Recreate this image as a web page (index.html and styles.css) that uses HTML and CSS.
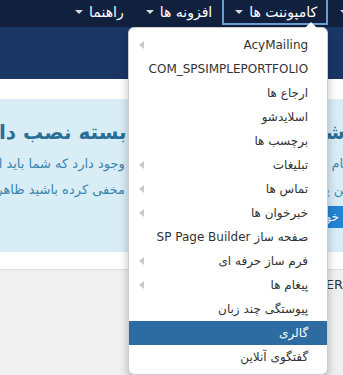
FILE: index.html
```
<!DOCTYPE html>
<html lang="fa" dir="ltr">
<head>
    <meta charset="UTF-8">
    <meta name="viewport" content="width=device-width, initial-scale=1.0">
    <title>کنترل پنل</title>
    <link rel="stylesheet" href="styles.css">
</head>
<body>

    <div class="page">
        <nav class="navbar">
            <ul class="nav">
                <li><a href="#">محتوا <span class="caret"></span></a></li>
                <li class="open">
                    <a href="#">کامپوننت ها <span class="caret"></span></a>
                    <ul class="dropdown-menu">
                        <li><a href="#">AcyMailing <span class="sub-caret"></span></a></li>
                        <li><a href="#">COM_SPSIMPLEPORTFOLIO</a></li>
                        <li><a href="#">ارجاع ها</a></li>
                        <li><a href="#">اسلایدشو</a></li>
                        <li><a href="#">برچسب ها</a></li>
                        <li><a href="#">تبلیغات <span class="sub-caret"></span></a></li>
                        <li><a href="#">تماس ها <span class="sub-caret"></span></a></li>
                        <li><a href="#">خبرخوان ها <span class="sub-caret"></span></a></li>
                        <li><a href="#">صفحه ساز SP Page Builder</a></li>
                        <li><a href="#">فرم ساز حرفه ای <span class="sub-caret"></span></a></li>
                        <li><a href="#">پیغام ها <span class="sub-caret"></span></a></li>
                        <li><a href="#">پیوستگی چند زبان</a></li>
                        <li class="active"><a href="#">گالری</a></li>
                        <li><a href="#">گفتگوی آنلاین</a></li>
                    </ul>
                </li>
                <li><a href="#">افزونه ها <span class="caret"></span></a></li>
                <li><a href="#">راهنما <span class="caret"></span></a></li>
            </ul>
        </nav>

        <header class="header"></header>
        <div class="subhead"></div>

        <div class="content">
            <div class="alert">
                <h2>شما پیغام های پس از بسته نصب دارید</h2>
                <p>پیام های مهمی پس از نصب برای سیستم وجود دارد که شما باید از آنها آگاه باشید</p>
                <p>این پیام ها را تا زمانی که شما همه آنها را مخفی کرده باشید ظاهر می شوند</p>
                <button class="btn">خواندن پیام ها</button>
            </div>
        </div>

        <div class="spacer"></div>

        <div class="panel">
            <span class="panel-title">ORDER</span>
        </div>
    </div>

</body>
</html>
```

FILE: styles.css
```
body {
    margin: 0;
    padding: 0;
    overflow: hidden;
    background-color: #f0f0f0;
    font-family: "DejaVu Sans", sans-serif;
}
.page {
    width: 420px;
    min-height: 375px;
    direction: rtl;
}
.navbar {
    background-color: #11213d;
    height: 27px;
    padding-right: 24px;
}
.nav {
    display: flex;
    margin: 0;
    padding: 0;
    list-style: none;
}
.nav > li {
    position: relative;
}
.nav > li > a {
    display: flex;
    align-items: center;
    gap: 6px;
    height: 25px;
    box-sizing: border-box;
    padding: 0 9px 0 11px;
    border: 1px solid transparent;
    border-top: none;
    color: #fff;
    font-size: 14px;
    text-decoration: none;
    white-space: nowrap;
}
.nav > li.open > a {
    border-color: #6b9fd2;
    border-width: 0 2px 2px 2px;
}
.caret {
    width: 0;
    height: 0;
    border-top: 4px solid #d8d8d8;
    border-left: 4px solid transparent;
    border-right: 4px solid transparent;
}
.dropdown-menu {
    position: absolute;
    top: 27px;
    right: 0;
    width: 200px;
    box-sizing: border-box;
    margin: 0;
    padding: 5px 0;
    list-style: none;
    background-color: #fff;
    border: 1px solid rgba(0, 0, 0, 0.2);
    border-radius: 6px;
    box-shadow: 0 5px 10px rgba(0, 0, 0, 0.25);
    z-index: 10;
}
.dropdown-menu::before {
    content: "";
    position: absolute;
    top: -6px;
    right: 10px;
    border-bottom: 6px solid #fff;
    border-left: 6px solid transparent;
    border-right: 6px solid transparent;
}
.dropdown-menu a {
    display: flex;
    justify-content: space-between;
    align-items: center;
    height: 24px;
    padding: 0 19px 0 10px;
    color: #333;
    font-size: 12px;
    text-decoration: none;
    white-space: nowrap;
}
.dropdown-menu .active a {
    background-color: #2d6ca2;
    color: #fff;
}
.sub-caret {
    width: 0;
    height: 0;
    border-top: 4px solid transparent;
    border-bottom: 4px solid transparent;
    border-right: 5px solid #c8c8c8;
}
.header {
    height: 52px;
    background-color: #1a3665;
}
.subhead {
    height: 20px;
    background-color: #fff;
}
.content {
    background-color: #fff;
    padding: 0 55px 0 0;
}
.alert {
    height: 153px;
    box-sizing: border-box;
    padding: 20px 14px 0 0;
    background-color: #d9edf7;
    color: #3a87ad;
    white-space: nowrap;
}
.alert h2 {
    margin: 0 0 6px;
    padding-right: 6px;
    font-size: 20px;
    line-height: 26px;
    color: #2b6e96;
}
.alert p {
    margin: 0;
    font-size: 13px;
    line-height: 26px;
}
.btn {
    margin-top: 3px;
    height: 22px;
    padding: 0 12px;
    border: none;
    border-radius: 3px;
    background-color: #2384d3;
    color: #fff;
    font-family: "DejaVu Sans", sans-serif;
    font-size: 12px;
}
.spacer {
    height: 17px;
    background-color: #fff;
    border-bottom: 1px solid #ddd;
}
.panel {
    padding: 6px 55px 0 0;
}
.panel-title {
    display: block;
    padding-right: 22px;
    font-size: 13px;
    line-height: 18px;
    color: #333;
}
```
